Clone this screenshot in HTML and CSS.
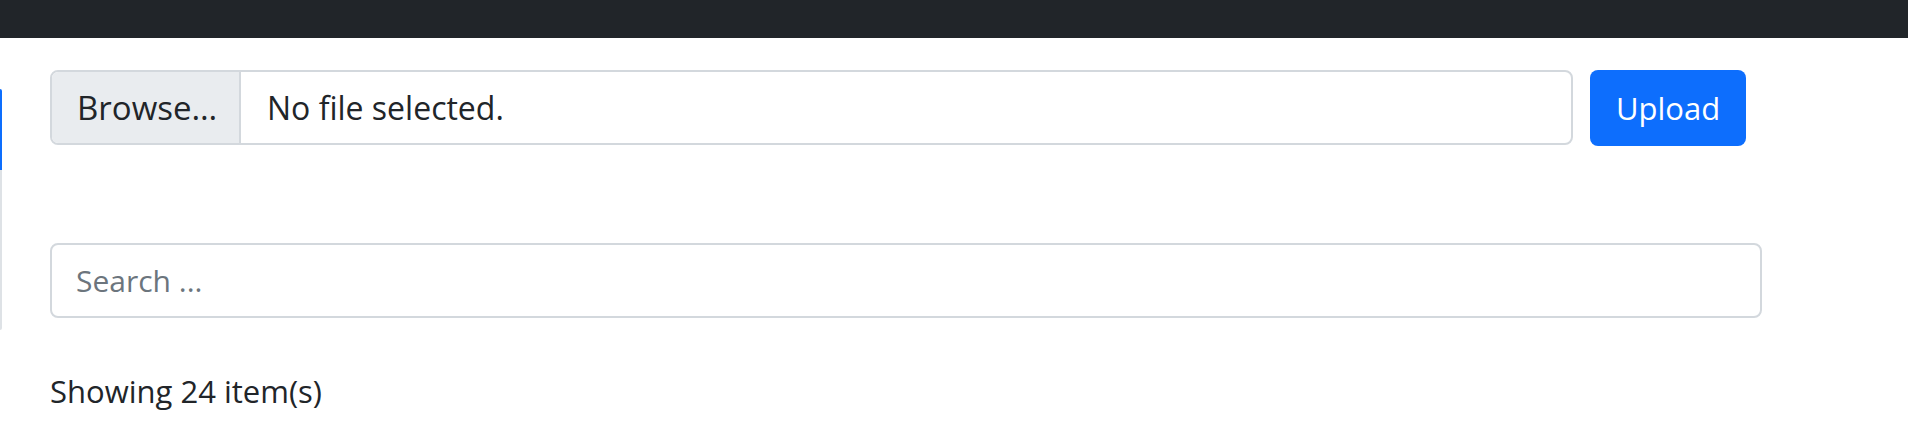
FILE: index.html
```html
<!DOCTYPE html>
<html>
<head>
<meta charset="utf-8">
<link rel="stylesheet" href="styles.css">
</head>
<body>
<header class="navbar"></header>
<div class="layout">
  <aside class="sidebar">
    <div class="side-active"></div>
    <div class="side-rest"></div>
  </aside>
  <main class="main">
    <div class="upload-row">
      <div class="file-input">
        <span class="file-btn">Browse…</span>
        <span class="file-name">No file selected.</span>
      </div>
      <button class="btn-upload">Upload</button>
    </div>
    <div class="search">
      <span class="placeholder">Search ...</span>
    </div>
    <p class="count">Showing 24 item(s)</p>
  </main>
</div>
</body>
</html>
```
FILE: styles.css
```css
html, body { margin: 0; padding: 0; background: #fff; }
body {
  font-family: "Open Sans", "Noto Sans", sans-serif;
  color: #212529;
}
.navbar { height: 38px; background: #212529; }
.layout { display: flex; }
.sidebar { width: 2px; padding-top: 51px; }
.side-active { height: 81px; background: #0d6efd; border-top-right-radius: 2px; }
.side-rest { height: 160px; background: #dee2e6; border-bottom-right-radius: 2px; }
.main { margin-left: 48px; width: 1712px; padding-top: 32px; }
.upload-row { display: flex; gap: 17px; }
.file-input {
  width: 1523px; height: 75px; box-sizing: border-box;
  border: 2px solid #d3d8dd; border-radius: 8px;
  display: flex; overflow: hidden;
  font-size: 32px;
}
.file-btn {
  width: 189px; box-sizing: border-box;
  background: #e9ecef; border-right: 2px solid #d3d8dd;
  display: flex; align-items: center; padding-left: 25px;
  font-size: 33px;
}
.file-name { display: flex; align-items: center; padding-left: 26px; }
.btn-upload {
  width: 156px; height: 76px; border: 0; border-radius: 8px;
  background: #0d6efd; color: #fff; font-family: inherit; font-size: 31px;
  padding: 0;
}
.search {
  margin-top: 97px; height: 75px; box-sizing: border-box;
  border: 2px solid #d3d8dd; border-radius: 8px;
  display: flex; align-items: center; padding-left: 24px;
  font-size: 30px;
}
.placeholder { color: #6c757d; }
.count { margin: 51px 0 0 0; font-size: 31px; line-height: 44px; }
```
